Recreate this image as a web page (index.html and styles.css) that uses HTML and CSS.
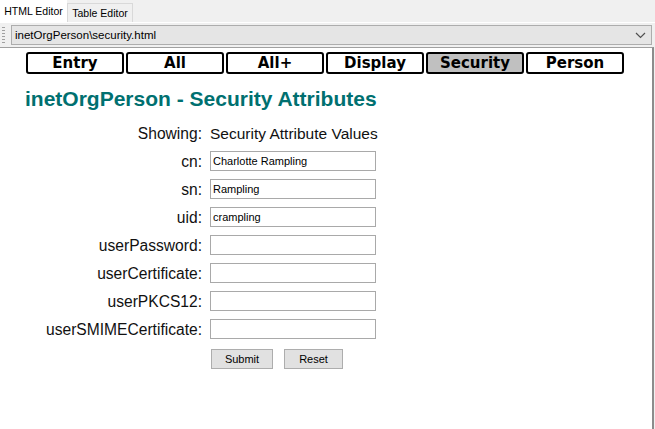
FILE: index.html
```html
<!DOCTYPE html>
<html>
<head>
<title>HTML Editor - security.html</title>
<link rel="stylesheet" href="styles.css">
</head>
<body>

<!-- editor tabs -->
<div class="tabs">
<div class="tab active">HTML Editor</div>
<div class="tab">Table Editor</div>
</div>

<!-- file picker -->
<div class="toolbar">
<div class="grip"></div>
<div class="combo">
<span>inetOrgPerson\security.html</span>
<svg width="11" height="7" viewBox="0 0 11 7"><path d="M1 1 L5.5 5.5 L10 1" fill="none" stroke="#505050" stroke-width="1.2"/></svg>
</div>
</div>

<!-- rendered page -->
<div class="page">
<div class="nav">
<a class="nav-btn">Entry</a>
<a class="nav-btn">All</a>
<a class="nav-btn">All+</a>
<a class="nav-btn">Display</a>
<a class="nav-btn current">Security</a>
<a class="nav-btn">Person</a>
</div>

<h1 class="title">inetOrgPerson - Security Attributes</h1>

<form class="attrs">
<label class="lbl">Showing:</label>
<div class="showing">Security Attribute Values</div>

<label class="lbl">cn:</label>
<input class="field" type="text" value="Charlotte Rampling">

<label class="lbl">sn:</label>
<input class="field" type="text" value="Rampling">

<label class="lbl">uid:</label>
<input class="field" type="text" value="crampling">

<label class="lbl">userPassword:</label>
<input class="field" type="text" value="">

<label class="lbl">userCertificate:</label>
<input class="field" type="text" value="">

<label class="lbl">userPKCS12:</label>
<input class="field" type="text" value="">

<label class="lbl">userSMIMECertificate:</label>
<input class="field" type="text" value="">

<div></div>
<div class="actions">
<button type="button" class="btn submit">Submit</button>
<button type="button" class="btn reset">Reset</button>
</div>
</form>
</div>

</body>
</html>
```

FILE: styles.css
```css
* {
margin: 0;
padding: 0;
box-sizing: border-box;
}

body {
width: 655px;
height: 429px;
overflow: hidden;
background: #f0f0f0;
font-family: "Liberation Sans", Arial, sans-serif;
color: #000;
}

/* tabs */
.tabs {
display: flex;
align-items: flex-end;
height: 22px;
}

.tab {
width: 66px;
height: 19px;
text-align: center;
font-size: 10.5px;
line-height: 18px;
border: 1px solid #d9d9d9;
border-bottom: none;
background: #f0f0f0;
}

.tab.active {
width: 67px;
height: 22px;
line-height: 21px;
background: #fff;
border-color: #fff;
}

/* toolbar */
.toolbar {
display: flex;
align-items: center;
height: 25px;
padding: 0 3px 0 2px;
border-top: 1px solid #fff;
}

.grip {
width: 3px;
height: 17px;
margin-right: 6px;
background: repeating-linear-gradient(#a0a0a0 0 1px, transparent 1px 3px);
}

.combo {
flex: 1;
height: 20px;
display: flex;
align-items: center;
justify-content: space-between;
padding: 0 5px 0 3px;
background: #e5e5e5;
border: 1px solid #adadad;
font-size: 11.5px;
}

/* page */
.page {
height: 382px;
margin-right: 1px;
background: #fff;
border-top: 1px solid #a0a0a0;
border-right: 2px solid #8c8c8c;
padding: 4px 0 0 25px;
}

.nav {
display: flex;
gap: 2px;
margin-left: 1px;
}

.nav-btn {
width: 98px;
height: 22px;
border: 2px solid #000;
border-radius: 3px;
text-align: center;
font-family: "DejaVu Sans", Verdana, sans-serif;
font-weight: bold;
font-size: 15px;
line-height: 19px;
}

.nav-btn.current {
background: #c0c0c0;
}

.title {
margin: 13px 0 12px;
font-size: 21px;
line-height: 24px;
font-weight: bold;
color: #007070;
}

/* attribute form */
.attrs {
display: grid;
grid-template-columns: 177px 166px;
grid-auto-rows: 20px;
column-gap: 8px;
row-gap: 8px;
}

.lbl {
text-align: right;
font-size: 15.6px;
line-height: 21px;
color: #111;
}

.showing {
font-size: 15.5px;
line-height: 21px;
white-space: nowrap;
color: #111;
}

.field {
width: 166px;
height: 20px;
border: 1px solid #a9a9a9;
padding: 0 2px;
font-family: "Liberation Sans", Arial, sans-serif;
font-size: 11px;
color: #000;
outline: none;
}

.actions {
display: flex;
gap: 11px;
margin-top: 2px;
padding-left: 1px;
}

.btn {
height: 20px;
background: #e1e1e1;
border: 1px solid #adadad;
font-family: "Liberation Sans", Arial, sans-serif;
font-size: 11px;
color: #000;
}

.submit {
width: 62px;
}

.reset {
width: 59px;
}
```
